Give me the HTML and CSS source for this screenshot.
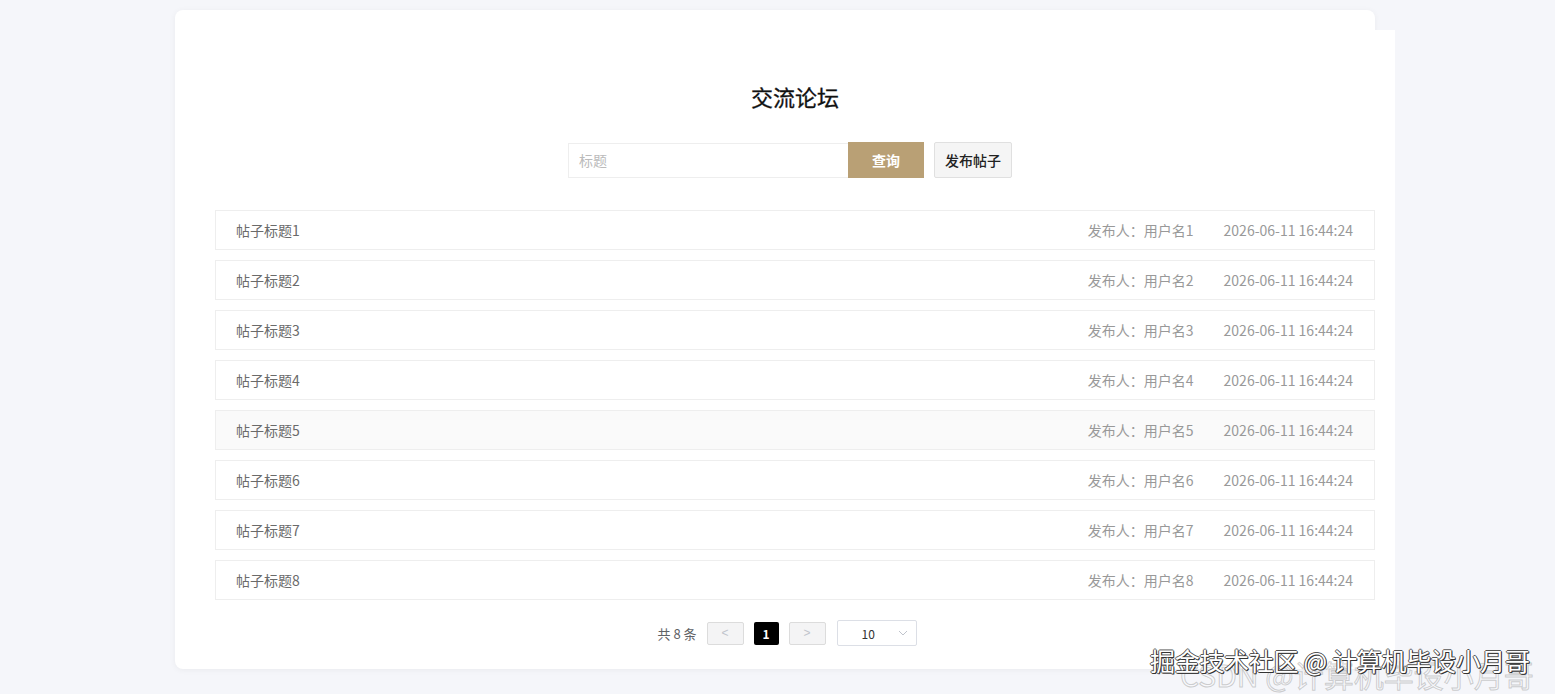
FILE: index.html
```html
<!DOCTYPE html>
<html lang="zh-CN">
<head>
<meta charset="utf-8">
<title>交流论坛</title>
<link rel="stylesheet" href="styles.css">
</head>
<body>
<div class="page">
  <div class="card">
    <h1 class="title">交流论坛</h1>
    <div class="search">
      <input class="search-input" type="text" placeholder="标题">
      <button class="btn-query">查询</button>
      <button class="btn-post">发布帖子</button>
    </div>
    <ul class="list">
      <li class="row"><span class="row-title">帖子标题1</span><span class="row-meta"><span>发布人：用户名1</span><span>2026-06-11 16:44:24</span></span></li>
      <li class="row"><span class="row-title">帖子标题2</span><span class="row-meta"><span>发布人：用户名2</span><span>2026-06-11 16:44:24</span></span></li>
      <li class="row"><span class="row-title">帖子标题3</span><span class="row-meta"><span>发布人：用户名3</span><span>2026-06-11 16:44:24</span></span></li>
      <li class="row"><span class="row-title">帖子标题4</span><span class="row-meta"><span>发布人：用户名4</span><span>2026-06-11 16:44:24</span></span></li>
      <li class="row row-hover"><span class="row-title">帖子标题5</span><span class="row-meta"><span>发布人：用户名5</span><span>2026-06-11 16:44:24</span></span></li>
      <li class="row"><span class="row-title">帖子标题6</span><span class="row-meta"><span>发布人：用户名6</span><span>2026-06-11 16:44:24</span></span></li>
      <li class="row"><span class="row-title">帖子标题7</span><span class="row-meta"><span>发布人：用户名7</span><span>2026-06-11 16:44:24</span></span></li>
      <li class="row"><span class="row-title">帖子标题8</span><span class="row-meta"><span>发布人：用户名8</span><span>2026-06-11 16:44:24</span></span></li>
    </ul>
    <div class="pager">
      <span class="total">共 8 条</span>
      <button class="pg-btn">&lt;</button>
      <span class="pg-num">1</span>
      <button class="pg-btn">&gt;</button>
      <div class="pg-size"><span>10</span><svg class="chev" width="10" height="6" viewBox="0 0 10 6"><path d="M1 1 L5 5 L9 1" fill="none" stroke="#c0c4cc" stroke-width="1"/></svg></div>
    </div>
  </div>
  <div class="strip"></div>
</div>
<div class="wm-back">CSDN @计算机毕设小月哥</div>
<div class="wm-front">掘金技术社区 @ 计算机毕设小月哥</div>
</body>
</html>
```
FILE: styles.css
```css
* { box-sizing: border-box; }
html, body { margin: 0; padding: 0; }
body {
  background: #f5f6fa;
  font-family: "Noto Sans CJK SC", "Noto Sans", sans-serif;
  height: 694px;
  overflow: hidden;
  position: relative;
}
.page {
  display: flex;
  align-items: flex-start;
  padding: 10px 0 0 175px;
}
.card {
  width: 1200px;
  height: 659px;
  background: #fff;
  border-radius: 8px;
  box-shadow: 0 1px 6px rgba(0, 0, 0, 0.05);
  padding: 71px 0 0 40px;
}
.strip {
  width: 20px;
  height: 640px;
  margin-top: 20px;
  background: #fff;
}
.title {
  margin: 0;
  font-size: 22px;
  line-height: 30px;
  font-weight: 400;
  color: #111;
  text-align: center;
  -webkit-text-stroke: 0.3px #111;
}
.search {
  display: flex;
  justify-content: center;
  align-items: center;
  margin-top: 31px;
  margin-left: -10px;
}
.search-input {
  width: 280px;
  height: 35px;
  border: 1px solid #eee;
  border-right: none;
  padding: 0 10px;
  font-family: inherit;
  font-size: 14px;
  color: #333;
  outline: none;
}
.search-input::placeholder { color: #bbb; }
.btn-query {
  width: 76px;
  height: 36px;
  border: none;
  background: #b9a075;
  color: #fff;
  font-family: inherit;
  font-size: 14px;
  font-weight: 700;
}
.btn-post {
  width: 78px;
  height: 36px;
  margin-left: 10px;
  border: 1px solid #e0e0e0;
  border-radius: 2px;
  background: #f5f5f5;
  color: #222;
  font-family: inherit;
  font-size: 14px;
  font-weight: 500;
}
.list {
  list-style: none;
  margin: 32px 0 0;
  padding: 0;
  display: flex;
  flex-direction: column;
  gap: 10px;
}
.row {
  height: 40px;
  border: 1px solid #eee;
  display: flex;
  align-items: center;
  justify-content: space-between;
  padding: 0 21px 0 20px;
  font-size: 14px;
  color: #666;
}
.row-title { color: #6a6a6a; }
.row-hover { background: #fafafa; }
.row-meta {
  display: flex;
  gap: 30px;
  color: #999;
}
.pager {
  margin-top: 20px;
  display: flex;
  justify-content: center;
  align-items: center;
  margin-left: -16px;
  font-size: 13px;
  color: #606266;
}
.total { margin-right: 10px; }
.pg-btn {
  width: 37px;
  height: 23px;
  border: 1px solid #dcdcdc;
  border-radius: 2px;
  background: #f4f4f5;
  color: #c0c4cc;
  font-size: 12px;
  font-family: "Liberation Sans", sans-serif;
  padding: 0;
}
.pg-num {
  width: 25px;
  height: 23px;
  margin: 0 10px;
  background: #000;
  color: #fff;
  font-size: 12px;
  font-weight: 700;
  display: flex;
  align-items: center;
  justify-content: center;
  border-radius: 2px;
}
.pg-size {
  margin-left: 11px;
  width: 80px;
  height: 26px;
  border: 1px solid #dcdfe6;
  border-radius: 2px;
  display: flex;
  align-items: center;
  justify-content: space-between;
  padding: 0 8px 0 24px;
  font-size: 12px;
  color: #333;
}
.wm-back {
  position: absolute;
  left: 1180px;
  top: 655px;
  font-size: 30px;
  line-height: 38px;
  color: rgba(255, 255, 255, 0.3);
  -webkit-text-stroke: 1px rgba(150, 150, 150, 0.45);
  white-space: nowrap;
  font-family: "Noto Sans CJK SC", sans-serif;
}
.wm-front {
  position: absolute;
  left: 1150px;
  top: 643px;
  font-size: 25px;
  letter-spacing: -0.3px;
  line-height: 34px;
  color: #fff;
  text-shadow: 1px 1px 0 #333, -1px 0 0 #555, 0 -1px 0 #555, 1px 0 0 #555, 0 1px 0 #555;
  white-space: nowrap;
  font-family: "Noto Sans CJK SC", sans-serif;
}
```
